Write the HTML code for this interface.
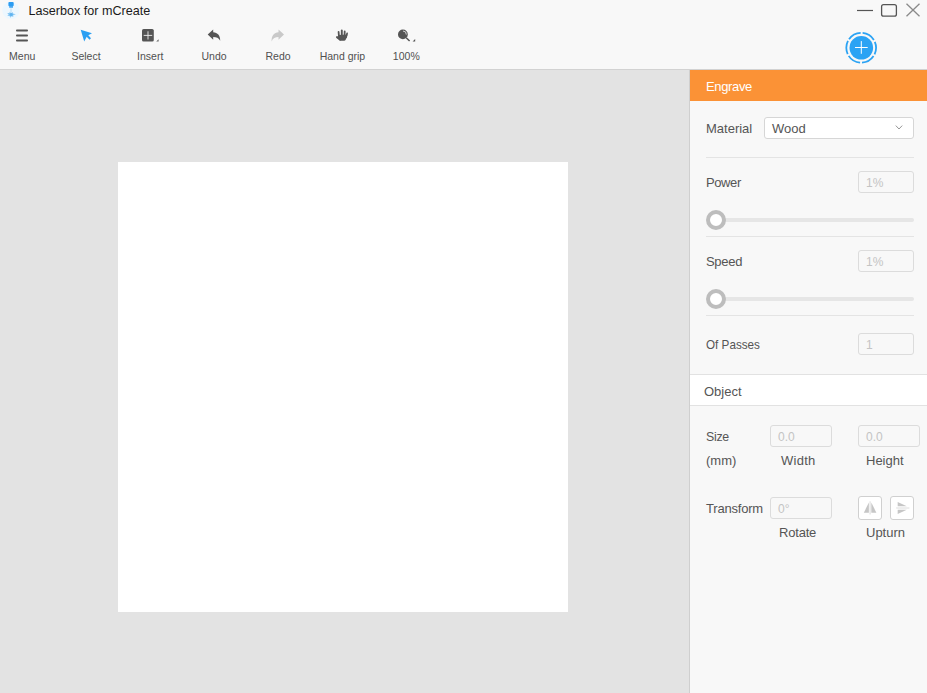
<!DOCTYPE html>
<html><head><meta charset="utf-8">
<style>
*{margin:0;padding:0;box-sizing:border-box;}
html,body{width:927px;height:693px;overflow:hidden;background:#f8f8f8;font-family:"Liberation Sans",sans-serif;}
.a{position:absolute;}
.t{position:absolute;white-space:nowrap;}
.tb{position:absolute;top:51px;width:64px;text-align:center;white-space:nowrap;font-size:10.5px;line-height:11px;color:#505050;}
.lbl{font-size:13px;line-height:13px;color:#555;}
.inp{position:absolute;border:1px solid #dcdcdc;border-radius:3px;background:#f8f8f8;}
.ph{position:absolute;font-size:12px;line-height:12px;color:#c4c4c4;white-space:nowrap;}
.hr{position:absolute;height:1px;background:#e4e4e4;}
</style></head>
<body>
<!-- title bar -->
<div class="a" style="left:0;top:0;width:927px;height:69px;background:#f8f8f8;"></div>
<svg class="a" style="left:0;top:0" width="24" height="22" viewBox="0 0 24 22">
  <circle cx="10.95" cy="10.5" r="8.7" fill="#edf7fe"/>
  <rect x="8.4" y="2.1" width="5.3" height="4.1" rx="1" fill="#2a9cf2"/>
  <rect x="9.2" y="5.9" width="3.8" height="1.9" fill="#4aa8f0"/>
  <line x1="11" y1="8.3" x2="11" y2="12" stroke="#b5dcf6" stroke-width="1"/>
  <path d="M7.2 13 L9.3 13.1 L9.8 11.8 L11 12.9 L12.6 12.1 L13 13.6 L15.8 14.3 L13.2 15.2 L13.3 17 L11.6 16.3 L10.2 17.8 L9.6 16 L7.3 15.8 L8.6 14.5 Z" fill="#8ccaf4"/>
  <circle cx="11.2" cy="14.5" r="1.6" fill="#5fb3f0"/>
</svg>
<div class="t" style="left:28.5px;top:5px;font-size:12.6px;line-height:13px;color:#1b1b1b;">Laserbox for mCreate</div>

<!-- window controls -->
<svg class="a" style="left:850px;top:0" width="77" height="22" viewBox="0 0 77 22">
  <line x1="7" y1="10.5" x2="23" y2="10.5" stroke="#555" stroke-width="1.2"/>
  <rect x="31.6" y="4.6" width="14.8" height="11.6" rx="2" fill="none" stroke="#555" stroke-width="1.3"/>
  <line x1="56.5" y1="3.8" x2="69.5" y2="16.3" stroke="#8a8a8a" stroke-width="1.3"/>
  <line x1="69.5" y1="3.8" x2="56.5" y2="16.3" stroke="#8a8a8a" stroke-width="1.3"/>
</svg>

<!-- toolbar icons -->
<svg class="a" style="left:0;top:20px" width="440" height="26" viewBox="0 20 440 26">
  <!-- menu -->
  <rect x="16" y="29.5" width="12" height="1.9" rx="0.9" fill="#555"/>
  <rect x="16" y="34.5" width="12" height="1.9" rx="0.9" fill="#555"/>
  <rect x="16" y="39.5" width="12" height="1.9" rx="0.9" fill="#555"/>
  <!-- select cursor -->
  <path d="M80.7 29.7 L92 33.2 L88.3 35.2 L91 38.3 L89.5 39.8 L86.7 36.8 L84.2 41.4 Z" fill="#2b9ff2"/>
  <!-- insert -->
  <rect x="142" y="29" width="11.8" height="12.6" rx="1.6" fill="#555"/>
  <line x1="148" y1="31.3" x2="148" y2="39.5" stroke="#eee" stroke-width="0.9"/>
  <line x1="143.7" y1="35.4" x2="152.2" y2="35.4" stroke="#eee" stroke-width="0.9"/>
  <path d="M156.2 41.4 L158.6 39.2 L158.6 41.4Z" fill="#666"/>
  <!-- undo -->
  <path d="M207.7 34.5 L213.2 29.5 L213.2 32.3 C217.5 32.5 220.3 35.5 220.2 40.8 C218.8 38 216.5 37 213.2 37 L213.2 39.7 Z" fill="#555"/>
  <!-- redo -->
  <path d="M284 34.5 L278.5 29.5 L278.5 32.3 C274.2 32.5 271.4 35.5 271.6 41.4 C272.9 38 275.2 37 278.5 37 L278.5 39.7 Z" fill="#c9c9c9"/>
  <!-- hand -->
  <g stroke="#555" stroke-linecap="round" fill="none">
    <line x1="338.6" y1="32" x2="339" y2="37" stroke-width="1.8"/>
    <line x1="341.8" y1="30.5" x2="341.8" y2="37" stroke-width="1.9"/>
    <line x1="344.7" y1="31.4" x2="344.5" y2="37" stroke-width="1.8"/>
    <line x1="347.1" y1="33.4" x2="346" y2="37.5" stroke-width="1.7"/>
    <line x1="337" y1="37.1" x2="340.2" y2="39.6" stroke-width="2"/>
  </g>
  <path d="M338 35 L347.6 34.6 L345.8 39.6 Q345.2 40.8 344 40.8 L341 40.8 Q339.8 40.8 339 39.8 Z" fill="#555"/>
  <!-- zoom -->
  <circle cx="402.9" cy="34.4" r="4.9" fill="#555"/>
  <path d="M403 31 A3.4 3.4 0 0 1 406.3 34.6" stroke="#f0f0f0" stroke-width="0.8" fill="none"/>
  <line x1="406.2" y1="37.7" x2="409.6" y2="41" stroke="#555" stroke-width="1.5"/>
  <path d="M412.6 41.4 L415.2 38.9 L415.2 41.4 Z" fill="#555"/>
</svg>
<div class="tb" style="left:-9.75px;">Menu</div>
<div class="tb" style="left:54px;">Select</div>
<div class="tb" style="left:118.25px;">Insert</div>
<div class="tb" style="left:182.1px;">Undo</div>
<div class="tb" style="left:246.1px;">Redo</div>
<div class="tb" style="left:310.45px;">Hand grip</div>
<div class="tb" style="left:374.3px;">100%</div>

<!-- add button -->
<svg class="a" style="left:840px;top:27px" width="42" height="42" viewBox="0 0 42 42">
  <circle cx="21.2" cy="20.8" r="14.9" fill="none" stroke="#2ba3f4" stroke-width="1.8" stroke-dasharray="13.6 2.004" stroke-dashoffset="6.8"/>
  <circle cx="21.3" cy="20.8" r="11.8" fill="#2ba3f4"/>
  <line x1="15" y1="20.5" x2="27.7" y2="20.5" stroke="#fff" stroke-width="1"/>
  <line x1="21.3" y1="14.1" x2="21.3" y2="26.8" stroke="#fff" stroke-width="1"/>
</svg>

<!-- toolbar bottom border -->
<div class="a" style="left:0;top:69px;width:927px;height:1px;background:#d2d2d2;"></div>

<!-- canvas -->
<div class="a" style="left:0;top:70px;width:689px;height:623px;background:#e3e3e3;"></div>
<div class="a" style="left:118px;top:162px;width:450px;height:450px;background:#fff;"></div>

<!-- panel -->
<div class="a" style="left:689px;top:70px;width:1px;height:623px;background:#cfcfcf;"></div>
<div class="a" style="left:690px;top:70px;width:237px;height:623px;background:#f8f8f8;"></div>
<div class="a" style="left:690px;top:70px;width:237px;height:31px;background:#fb9236;"></div>
<div class="t" style="left:706px;top:80px;font-size:13px;line-height:13px;color:#fff;letter-spacing:-0.35px;">Engrave</div>

<div class="t lbl" style="left:706px;top:121.8px;">Material</div>
<div class="inp" style="left:764px;top:117px;width:150px;height:22px;background:#fff;border-color:#d6d6d6;"></div>
<div class="t lbl" style="left:772px;top:121.8px;color:#555;">Wood</div>
<svg class="a" style="left:894px;top:124px" width="10" height="7" viewBox="0 0 10 7"><path d="M1.8 1.6 L5 5 L8.2 1.6" stroke="#8a8a8a" stroke-width="0.9" fill="none"/></svg>
<div class="hr" style="left:706px;top:157px;width:208px;"></div>

<div class="t lbl" style="left:706px;top:176px;letter-spacing:-0.4px;">Power</div>
<div class="inp" style="left:858px;top:171px;width:56px;height:22px;"></div>
<div class="ph" style="left:866px;top:176.8px;">1%</div>
<div class="a" style="left:716px;top:218px;width:198px;height:4px;background:#e6e6e6;border-radius:2px;"></div>
<div class="a" style="left:706px;top:210px;width:20px;height:20px;border-radius:50%;border:4px solid #bdbdbd;background:#fff;"></div>
<div class="hr" style="left:706px;top:236px;width:208px;"></div>

<div class="t lbl" style="left:706px;top:255px;letter-spacing:-0.3px;">Speed</div>
<div class="inp" style="left:858px;top:250px;width:56px;height:22px;"></div>
<div class="ph" style="left:866px;top:255.8px;">1%</div>
<div class="a" style="left:716px;top:297px;width:198px;height:4px;background:#e6e6e6;border-radius:2px;"></div>
<div class="a" style="left:706px;top:289px;width:20px;height:20px;border-radius:50%;border:4px solid #bdbdbd;background:#fff;"></div>
<div class="hr" style="left:706px;top:315px;width:208px;"></div>

<div class="t lbl" style="left:706px;top:337.8px;transform:scaleX(0.9);transform-origin:0 0;">Of Passes</div>
<div class="inp" style="left:858px;top:333px;width:56px;height:22px;"></div>
<div class="ph" style="left:866px;top:338.8px;">1</div>

<!-- object header -->
<div class="a" style="left:690px;top:374px;width:237px;height:32px;background:#fff;border-top:1px solid #e2e2e2;border-bottom:1px solid #e2e2e2;"></div>
<div class="t lbl" style="left:704px;top:384.8px;">Object</div>

<div class="t lbl" style="left:706px;top:430.3px;letter-spacing:-0.3px;transform:scaleX(0.95);transform-origin:0 0;">Size</div>
<div class="inp" style="left:770px;top:425px;width:62px;height:22px;"></div>
<div class="ph" style="left:778px;top:430.5px;">0.0</div>
<div class="inp" style="left:858px;top:425px;width:62px;height:22px;"></div>
<div class="ph" style="left:866px;top:430.5px;">0.0</div>
<div class="t lbl" style="left:706px;top:454.3px;">(mm)</div>
<div class="t lbl" style="left:781px;top:454.3px;letter-spacing:0.25px;">Width</div>
<div class="t lbl" style="left:866px;top:454.3px;">Height</div>

<div class="t lbl" style="left:706px;top:502.2px;letter-spacing:-0.2px;">Transform</div>
<div class="inp" style="left:770px;top:497px;width:62px;height:22px;"></div>
<div class="ph" style="left:778px;top:502.5px;">0°</div>
<div class="inp" style="left:858px;top:496px;width:24px;height:24px;background:#fff;border-color:#d0d0d0;"></div>
<div class="inp" style="left:890px;top:496px;width:24px;height:24px;background:#fff;border-color:#d0d0d0;"></div>
<svg class="a" style="left:858px;top:496px" width="56" height="24" viewBox="858 496 56 24">
  <path d="M863.8 512.7 L868.9 502.6 L868.9 512.7Z" fill="#c6c6c6"/>
  <path d="M871.3 512.7 L871.3 502.6 L876.4 512.7Z" fill="#c6c6c6"/>
  <line x1="870.1" y1="501.3" x2="870.1" y2="514.5" stroke="#d8d8d8" stroke-width="0.9"/>
  <path d="M897.7 502.1 L906.8 506.2 L897.7 506.2Z" fill="#c6c6c6"/>
  <path d="M897.7 509.8 L906.8 509.8 L897.7 514Z" fill="#c6c6c6"/>
  <line x1="896.2" y1="508" x2="909.4" y2="508" stroke="#d8d8d8" stroke-width="0.9"/>
</svg>
<div class="t lbl" style="left:779px;top:525.6px;letter-spacing:-0.2px;">Rotate</div>
<div class="t lbl" style="left:866px;top:525.6px;">Upturn</div>
</body></html>
